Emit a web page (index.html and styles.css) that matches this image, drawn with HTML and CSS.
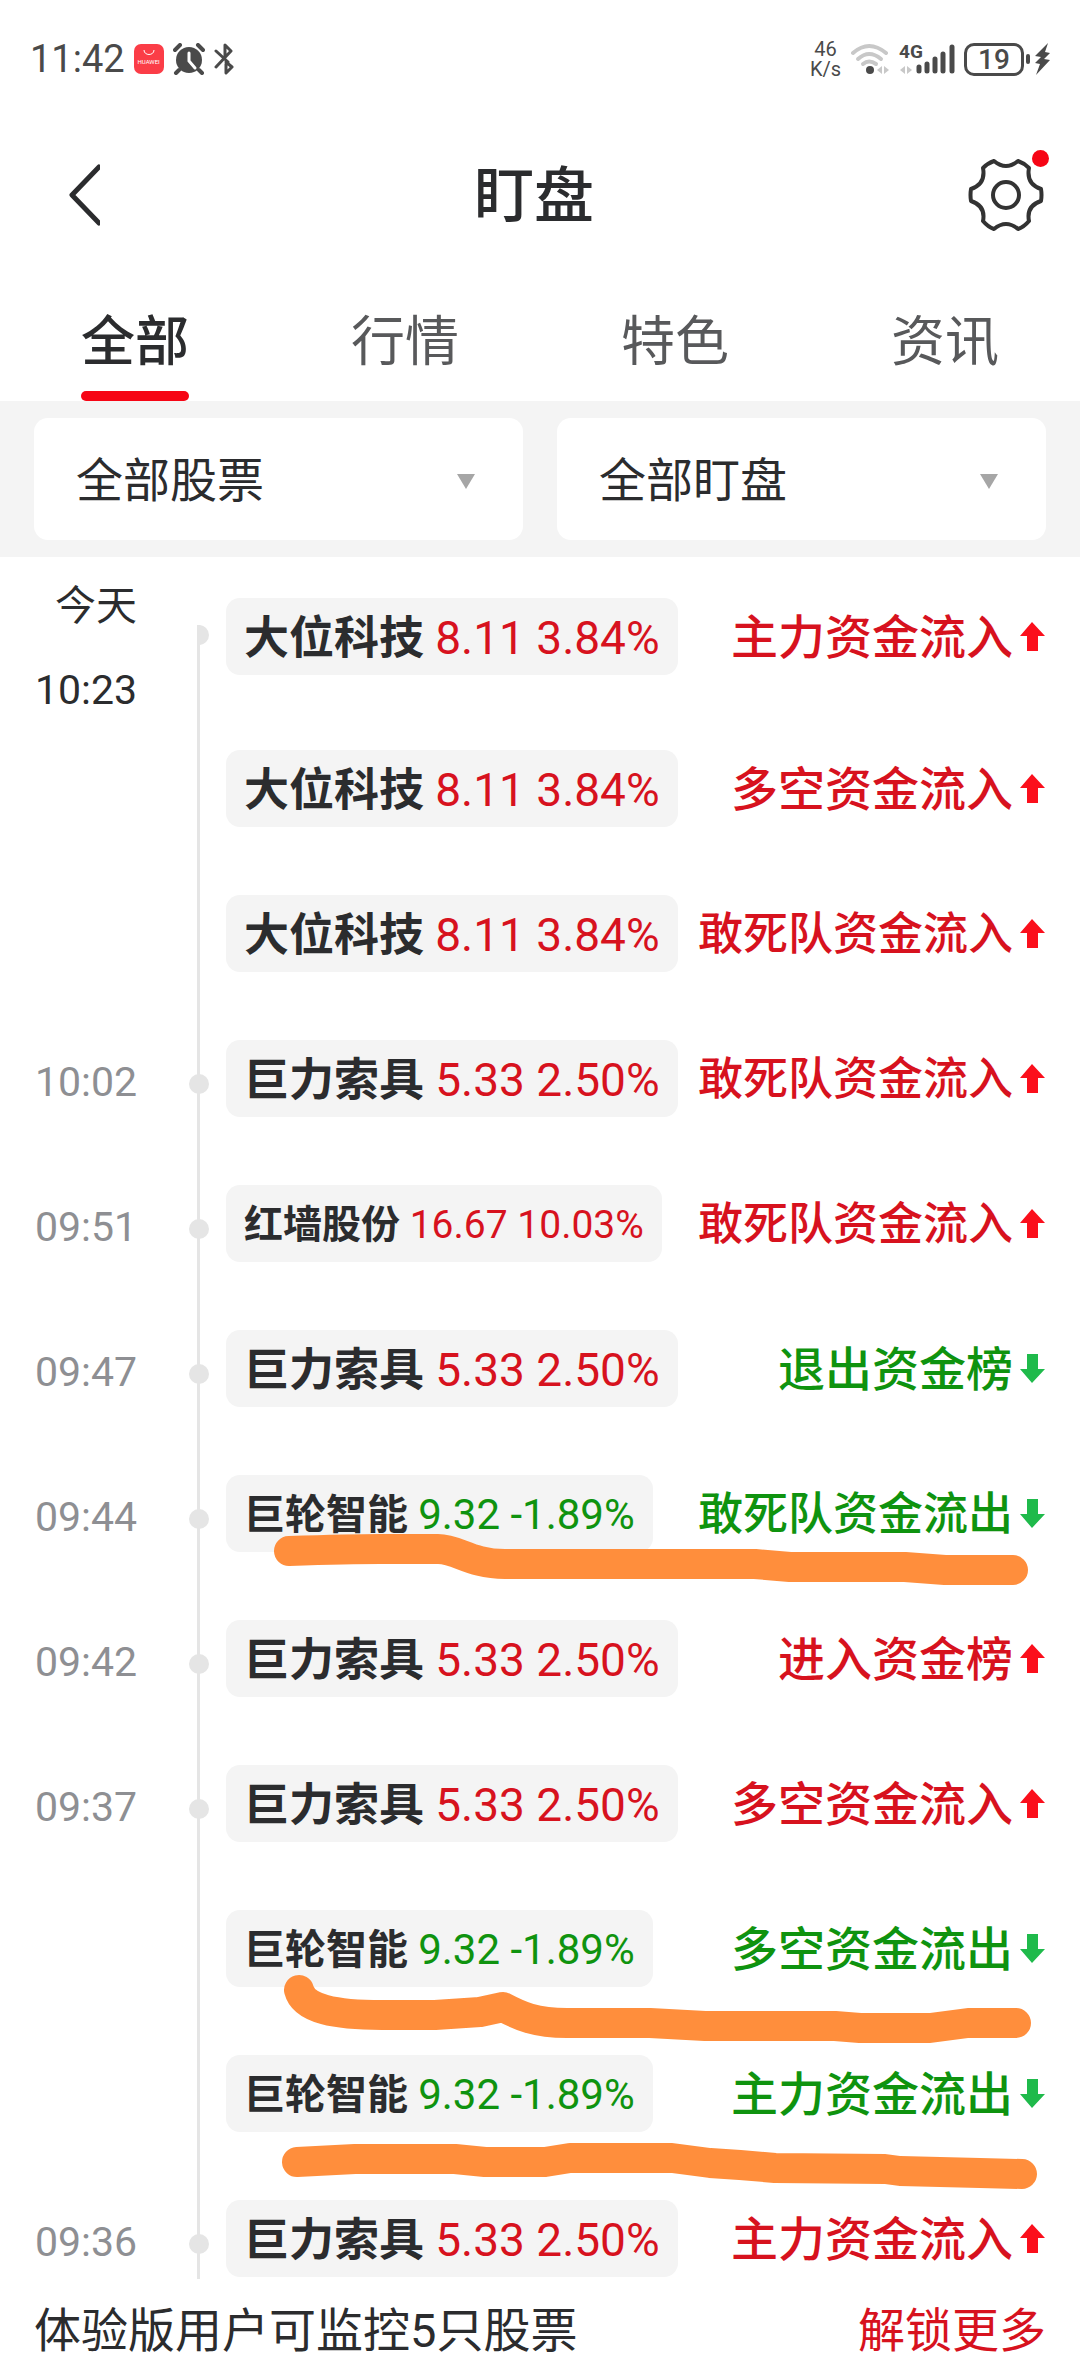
FILE: index.html
```html
<!DOCTYPE html>
<html lang="zh-CN">
<head>
  <meta charset="UTF-8" />
  <meta name="viewport" content="width=device-width, initial-scale=1" />
  <title>盯盘</title>
  <link rel="stylesheet" href="styles.css">
</head>
<body>

  <div class="status-bar">
    <div class="status-left">
      <span class="clock">11:42</span>
      <span class="app-badge">
        <svg width="12" height="6" viewBox="0 0 12 6"><path d="M1 0c0 6 10 6 10 0" fill="none" stroke="#fff" /></svg>
        <span class="app-name">HUAWEI</span>
      </span>
      <svg width="32" height="32" viewBox="0 0 32 32">
        <circle cx="16" cy="17" r="13" fill="#4a4a4a" />
        <path d="M2 7l5-5M30 7l-5-5M6 27l-3 3M26 27l3 3" stroke="#4a4a4a" stroke-width="4" stroke-linecap="round" />
        <path d="M16 10v8l6 7" fill="none" stroke="#fff" stroke-width="3" stroke-linecap="round" />
      </svg>
      <svg width="20" height="32" viewBox="0 0 20 32">
        <path d="M2 8l12 11M2 24L17 8l-6-6v11M12 19l6 5-6 6v-9" fill="none" stroke="#4a4a4a" stroke-width="3" stroke-linecap="round" stroke-linejoin="round" />
      </svg>
    </div>
    <div class="status-right">
      <div class="net-speed">
        <span>46</span>
        <span>K/s</span>
      </div>
      <svg class="wifi" width="40" height="32" viewBox="0 0 40 32">
        <g fill="none" stroke="#c8c8c8" stroke-width="4" stroke-linecap="round">
          <path d="M3 10q16-14 33 0" />
          <path d="M8 16q11-10 23 0" />
          <path d="M13 21q6-5 13 0" />
        </g>
        <circle cx="20" cy="27" r="4" fill="#4a4a4a" />
        <path d="M27 27l5-4v8zM34 23v8l5-4z" fill="#c8c8c8" />
      </svg>
      <div class="cell">
        <span class="cell-type">4G</span>
        <svg width="56" height="32" viewBox="0 0 56 32">
          <path d="M1 27l5-4v8zM8 23v8l5-4z" fill="#c8c8c8" />
          <path d="M20 24v4M28 21v7M36 16v12M44 11v17M53 4v24" stroke="#4a4a4a" stroke-width="5" stroke-linecap="round" />
        </svg>
      </div>
      <span class="battery">19</span>
      <svg width="24" height="34" viewBox="0 0 24 34">
        <rect x="0" y="12" width="4" height="10" rx="2" fill="#4a4a4a" />
        <path d="M22 1L9 14l6 1-6 6 5 1-4 11 14-15-6-1 6-6-5-1z" fill="#4a4a4a" />
      </svg>
    </div>
  </div>

  <header class="nav-bar">
    <button class="icon-btn back" aria-label="返回">
      <svg width="44" height="64" viewBox="0 0 44 64">
        <path d="M43 4L16 32l27 28" fill="none" stroke="#2b2c2e" stroke-width="5" stroke-linecap="round" stroke-linejoin="round" />
      </svg>
    </button>
    <h1>盯盘</h1>
    <button class="icon-btn settings" aria-label="设置">
      <svg width="76" height="76" viewBox="0 0 76 76">
        <g fill="none" stroke="#333" stroke-width="4" stroke-linejoin="round">
          <path d="M26 4Q38 14 50 4Q56 6 61 11Q58 27 73 32Q74 38 73 44Q58 49 61 64Q56 70 50 72Q38 62 26 72Q20 70 15 64Q18 49 3 44Q2 38 3 32Q18 27 15 11Q20 6 26 4z" />
          <circle cx="38" cy="38" r="13" />
        </g>
      </svg>
      <span class="red-dot"></span>
    </button>
  </header>

  <nav class="tabs">
    <button class="tab active">全部</button>
    <button class="tab">行情</button>
    <button class="tab">特色</button>
    <button class="tab">资讯</button>
  </nav>

  <div class="filters">
    <div class="filter">
      <select aria-label="股票">
        <option>全部股票</option>
      </select>
    </div>
    <div class="filter">
      <select aria-label="盯盘类型">
        <option>全部盯盘</option>
      </select>
    </div>
  </div>

  <main class="timeline">
    <ul id="alertList"></ul>

    <!-- marker strokes over the list -->
    <svg class="marks" viewBox="0 0 1080 1722">
      <path d="M289 994Q350 992 380 992H438C458 992 470 1007 505 1007H755L790 1010H905L945 1013H1013" />
      <path d="M299 1433C304 1452 335 1458 382 1458H435L480 1455L503 1450C520 1459 535 1466 567 1466H650L705 1469H835L860 1471H930L968 1466H1016" />
      <path d="M297 1605L355 1602H455L485 1605H545L570 1601H672L710 1606L740 1608L775 1611L885 1612L900 1614L980 1616L1022 1617" />
    </svg>
  </main>

  <footer class="trial-bar">
    <span>体验版用户可监控5只股票</span>
    <a href="#">解锁更多</a>
  </footer>

  <script>
    const alerts = [
      { day: "今天", time: "10:23", name: "大位科技", price: "8.11", change: "3.84%", type: "主力资金流入", dir: "up" },
      { name: "大位科技", price: "8.11", change: "3.84%", type: "多空资金流入", dir: "up" },
      { name: "大位科技", price: "8.11", change: "3.84%", type: "敢死队资金流入", dir: "up" },
      { time: "10:02", name: "巨力索具", price: "5.33", change: "2.50%", type: "敢死队资金流入", dir: "up" },
      { time: "09:51", name: "红墙股份", price: "16.67", change: "10.03%", type: "敢死队资金流入", dir: "up" },
      { time: "09:47", name: "巨力索具", price: "5.33", change: "2.50%", type: "退出资金榜", dir: "down" },
      { time: "09:44", name: "巨轮智能", price: "9.32", change: "-1.89%", type: "敢死队资金流出", dir: "down" },
      { time: "09:42", name: "巨力索具", price: "5.33", change: "2.50%", type: "进入资金榜", dir: "up" },
      { time: "09:37", name: "巨力索具", price: "5.33", change: "2.50%", type: "多空资金流入", dir: "up" },
      { name: "巨轮智能", price: "9.32", change: "-1.89%", type: "多空资金流出", dir: "down" },
      { name: "巨轮智能", price: "9.32", change: "-1.89%", type: "主力资金流出", dir: "down" },
      { time: "09:36", name: "巨力索具", price: "5.33", change: "2.50%", type: "主力资金流入", dir: "up" }
    ];

    const arrows = {
      up: "M12 0L25 14H18V29H7V14H0z",
      down: "M12 29L25 15H18V0H7V15H0z"
    };

    // Longer quotes get a smaller font so the chip still fits
    function chipSize(a) {
      const len = (a.price + a.change).length;
      if (len > 10) return "small";
      if (len > 9) return "medium";
      return "";
    }

    const list = document.getElementById("alertList");
    alerts.forEach(a => {
      const li = document.createElement("li");
      li.className = a.day ? "row first" : "row";
      const quote = a.change.startsWith("-") ? "down" : "up";
      li.innerHTML = `
        <div class="time">${a.day ? `<span>${a.day}</span>` : ""}${a.time ? `<time>${a.time}</time>` : ""}</div>
        <div class="axis">${a.time ? '<span class="dot"></span>' : ""}</div>
        <a class="chip ${chipSize(a)}" href="#"><b>${a.name}</b> <span class="quote ${quote}">${a.price} ${a.change}</span></a>
        <div class="type ${a.dir} ${a.type.length > 6 ? "long" : ""}">
          <span>${a.type}</span>
          <svg width="25" height="29" viewBox="0 0 25 29"><path d="${arrows[a.dir]}" /></svg>
        </div>`;
      list.appendChild(li);
    });
  </script>

</body>
</html>
```

FILE: styles.css
```css
* {
  box-sizing: border-box;
}
body {
  margin: 0;
  height: 100vh;
  display: flex;
  flex-direction: column;
  font-family: Roboto, "Noto Sans CJK SC", sans-serif;
  color: #2b2c2e;
  background: #fff;
}
button {
  background: none;
  border: none;
  padding: 0;
  font: inherit;
  color: inherit;
  cursor: pointer;
}
a {
  color: inherit;
  text-decoration: none;
}
svg {
  flex: none;
}

/* status bar */
.status-bar {
  display: flex;
  justify-content: space-between;
  align-items: center;
  height: 118px;
  padding: 0 30px;
  color: #4a4a4a;
}
.status-left,
.status-right {
  display: flex;
  align-items: center;
  gap: 9px;
}
.clock {
  font-size: 38px;
}
.app-badge {
  display: flex;
  flex-direction: column;
  align-items: center;
  width: 30px;
  height: 30px;
  padding-top: 6px;
  border-radius: 7px;
  background: #fb3d47;
  color: #fff;
}
.app-name {
  font-size: 6px;
  line-height: 12px;
}
.net-speed {
  display: flex;
  flex-direction: column;
  align-items: center;
  font-size: 20px;
  line-height: 20px;
}
.cell {
  position: relative;
  display: flex;
}
.cell-type {
  position: absolute;
  top: -1px;
  left: 0;
  font-size: 19px;
  line-height: 19px;
  font-weight: bold;
}
.battery {
  width: 60px;
  height: 33px;
  border: 3px solid #4a4a4a;
  border-radius: 10px;
  font-size: 28px;
  line-height: 28px;
  font-weight: 500;
  text-align: center;
}
.status-right .battery + svg {
  margin-left: -7px;
}

/* title */
.nav-bar {
  display: flex;
  justify-content: space-between;
  align-items: center;
  height: 154px;
  padding: 0 36px;
}
.nav-bar h1 {
  margin: 0;
  padding-top: 4px;
  font-size: 60px;
  line-height: 72px;
  font-weight: 500;
}
.icon-btn {
  display: flex;
  align-items: center;
  justify-content: flex-end;
  height: 76px;
}
.back {
  width: 64px;
}
.settings {
  position: relative;
  width: 76px;
}
.red-dot {
  position: absolute;
  top: -7px;
  right: -5px;
  width: 17px;
  height: 17px;
  border-radius: 50%;
  background: #f60515;
}

/* tabs */
.tabs {
  display: grid;
  grid-template-columns: repeat(4, 1fr);
  height: 129px;
}
.tab {
  display: flex;
  flex-direction: column;
  justify-content: flex-end;
  align-items: center;
  gap: 12px;
  font-size: 54px;
  line-height: 72px;
  color: #58595b;
}
.tab::after {
  content: "";
  width: 108px;
  height: 10px;
  border-radius: 5px;
}
.tab.active {
  color: #2b2c2e;
  font-weight: 500;
}
.tab.active::after {
  background: #f60515;
}

/* filters */
.filters {
  display: grid;
  grid-template-columns: 1fr 1fr;
  gap: 34px;
  padding: 17px 34px;
  background: #f4f4f4;
}
.filter {
  position: relative;
}
.filter::after {
  content: "";
  position: absolute;
  top: 56px;
  right: 48px;
  border: 9px solid transparent;
  border-top: 15px solid #a6a6a6;
  border-bottom: none;
  pointer-events: none;
}
.filter select {
  appearance: none;
  width: 100%;
  height: 122px;
  padding: 2px 42px 0;
  border: none;
  border-radius: 14px;
  background: #fff;
  color: inherit;
  font-family: inherit;
  font-size: 47px;
}

/* timeline */
.timeline {
  position: relative;
  flex: 1;
  min-height: 0;
  overflow: hidden;
}
.timeline ul {
  list-style: none;
  margin: 0;
  padding: 0;
}
.row {
  display: grid;
  grid-template-columns: 197px 29px auto 1fr;
  align-items: center;
  height: 145px;
  padding-right: 35px;
}
.row.first {
  height: 159px;
}
.time {
  display: flex;
  flex-direction: column;
  align-items: flex-end;
  gap: 34px;
  padding: 6px 60px 0 0;
  font-size: 41px;
  line-height: 50px;
  color: #8e8f93;
}
.first .time {
  align-self: start;
  padding-top: 24px;
  color: #2b2c2e;
}
.axis {
  position: relative;
  align-self: stretch;
  border-left: 3px solid #e5e5e5;
}
.dot {
  position: absolute;
  top: 68px;
  left: -11px;
  width: 20px;
  height: 20px;
  border-radius: 50%;
  background: #e5e5e5;
}
.first .axis {
  margin-top: 68px;
  overflow: hidden;
}
.first .dot {
  top: 0;
}
.chip {
  height: 77px;
  padding: 2px 18px 0;
  border-radius: 14px;
  background: #f4f4f4;
  font-size: 45px;
  line-height: 76px;
  white-space: nowrap;
}
.chip .quote {
  font-size: 46px;
}
.chip.medium {
  font-size: 41px;
}
.chip.medium .quote {
  font-size: 42px;
}
.chip.small,
.chip.small .quote {
  font-size: 39px;
}
.type {
  display: flex;
  justify-content: flex-end;
  align-items: center;
  gap: 7px;
  font-size: 47px;
  line-height: 76px;
  font-weight: 500;
  white-space: nowrap;
}
.type span {
  padding-top: 3px;
}
.type.long {
  font-size: 45px;
}
.up {
  color: #d7121e;
}
.down {
  color: #0f930f;
}
.type.up svg {
  fill: #fb0f1c;
}
.type.down svg {
  fill: #1fba4b;
}
.marks {
  position: absolute;
  top: 0;
  left: 0;
  width: 100%;
  pointer-events: none;
  fill: none;
  stroke: #ff8e3c;
  stroke-width: 30px;
  stroke-linecap: round;
  stroke-linejoin: round;
}

/* footer */
.trial-bar {
  display: flex;
  justify-content: space-between;
  align-items: center;
  height: 97px;
  padding: 0 34px 3px;
  background: #fff;
  font-size: 47px;
}
.trial-bar a {
  color: #d7121e;
}
```
